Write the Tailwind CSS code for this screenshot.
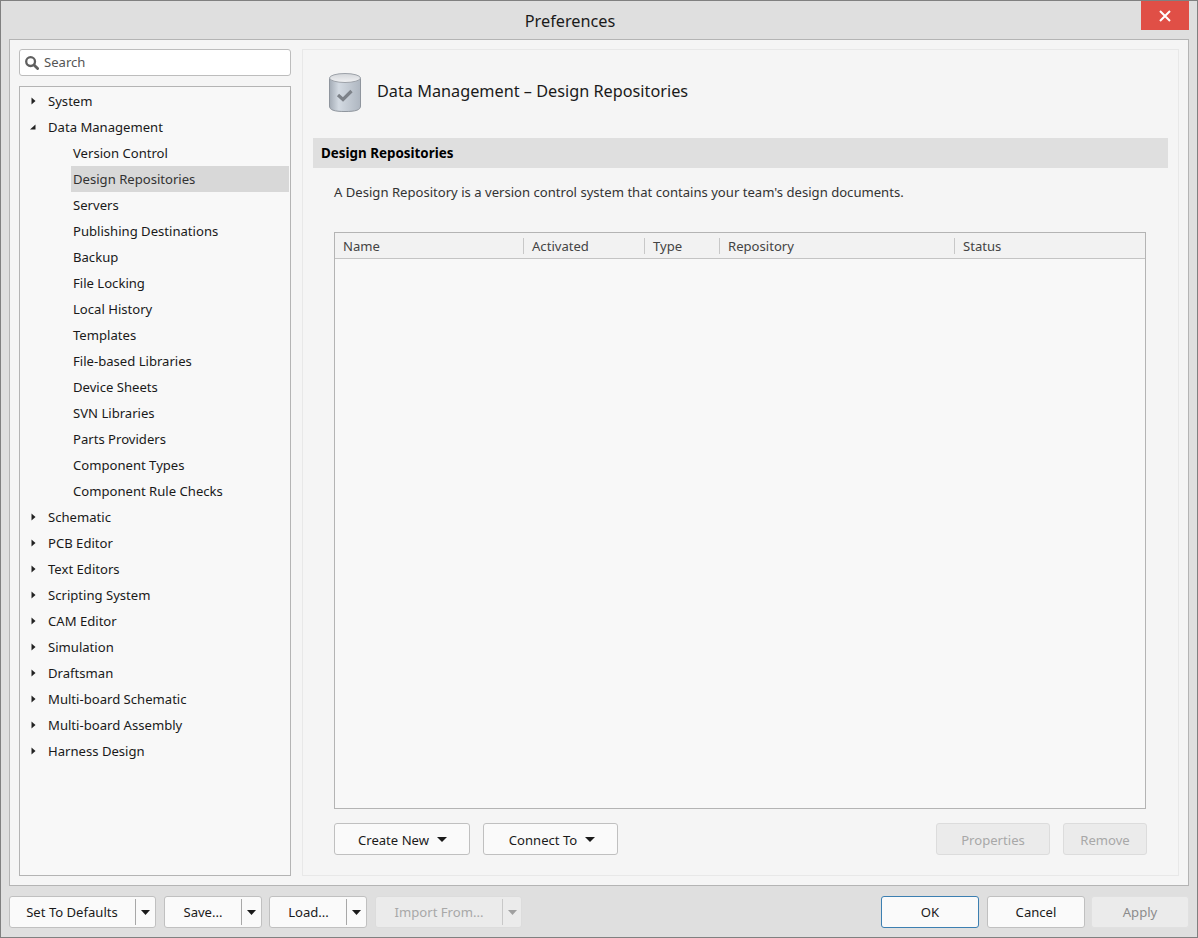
<!DOCTYPE html>
<html lang="en">
<head>
    <meta charset="UTF-8" />
    <title>Preferences</title>
    <script src="https://cdn.jsdelivr.net/npm/@tailwindcss/browser@4"></script>
</head>
<body class="bg-[#dfdfdf] text-[#1a1a1a] font-['Noto_Sans',sans-serif] text-[13.1px] leading-[20px] overflow-hidden">
<div class="w-[1198px] h-[938px] border border-[#808080] bg-[#dfdfdf] flex flex-col">

    <!-- title bar -->
    <div class="flex h-[38px] shrink-0">
        <div class="flex-1 text-center text-[16.25px] leading-[40px] pr-[2px]">Preferences</div>
        <div class="w-[48px] h-[29px] mr-[8px] bg-[#e04f46] flex items-center justify-center">
            <svg width="12" height="12" viewBox="0 0 12 12"><path d="M1 1L11 11M11 1L1 11" stroke="#fff" stroke-width="2" fill="none"/></svg>
        </div>
    </div>

    <!-- main area -->
    <div class="mx-[8px] h-[847px] shrink-0 border border-[#b4b4b4] bg-[#f5f5f5] p-[9px] flex gap-[11px]">

        <!-- left column -->
        <div class="w-[272px] shrink-0 flex flex-col gap-[10px]">
            <div class="h-[27px] shrink-0 bg-white border border-[#bdbdbd] rounded-[3px] flex items-center pl-[5px] gap-[5px] text-[#555]">
                <svg width="14" height="14" viewBox="0 0 14 14"><circle cx="5.6" cy="5.6" r="4.4" fill="none" stroke="#5f5f5f" stroke-width="2.3"/><path d="M9 9L12.6 12.6" stroke="#5f5f5f" stroke-width="2.8" stroke-linecap="round"/></svg>
                <span class="mb-[2px]">Search</span>
            </div>
            <div id="tree" class="flex-1 border border-[#b4b4b4] bg-[#f8f8f8] pt-[1px] px-[1px]">
                <div class="h-[26px] flex items-center"><span class="w-[12px] ml-[10px] flex"><svg width="5" height="8" viewBox="0 0 5 8"><path d="M0.5 0.5L4.5 4L0.5 7.5Z" fill="#222"/></svg></span><span class="ml-[5px]">System</span></div>
                <div class="h-[26px] flex items-center"><span class="w-[12px] ml-[8px] flex"><svg width="8" height="8" viewBox="0 0 8 8"><path d="M6.5 1.5V6.5H1Z" fill="#222"/></svg></span><span class="ml-[7px]">Data Management</span></div>
                <div class="h-[26px] flex items-center pl-[52px]">Version Control</div>
                <div class="h-[26px] flex items-center pl-[2px] ml-[50px] mr-0 bg-[#d8d8d8] text-[#333]">Design Repositories</div>
                <div class="h-[26px] flex items-center pl-[52px]">Servers</div>
                <div class="h-[26px] flex items-center pl-[52px]">Publishing Destinations</div>
                <div class="h-[26px] flex items-center pl-[52px]">Backup</div>
                <div class="h-[26px] flex items-center pl-[52px]">File Locking</div>
                <div class="h-[26px] flex items-center pl-[52px]">Local History</div>
                <div class="h-[26px] flex items-center pl-[52px]">Templates</div>
                <div class="h-[26px] flex items-center pl-[52px]">File-based Libraries</div>
                <div class="h-[26px] flex items-center pl-[52px]">Device Sheets</div>
                <div class="h-[26px] flex items-center pl-[52px]">SVN Libraries</div>
                <div class="h-[26px] flex items-center pl-[52px]">Parts Providers</div>
                <div class="h-[26px] flex items-center pl-[52px]">Component Types</div>
                <div class="h-[26px] flex items-center pl-[52px]">Component Rule Checks</div>
                <div class="h-[26px] flex items-center"><span class="w-[12px] ml-[10px] flex"><svg width="5" height="8" viewBox="0 0 5 8"><path d="M0.5 0.5L4.5 4L0.5 7.5Z" fill="#222"/></svg></span><span class="ml-[5px]">Schematic</span></div>
                <div class="h-[26px] flex items-center"><span class="w-[12px] ml-[10px] flex"><svg width="5" height="8" viewBox="0 0 5 8"><path d="M0.5 0.5L4.5 4L0.5 7.5Z" fill="#222"/></svg></span><span class="ml-[5px]">PCB Editor</span></div>
                <div class="h-[26px] flex items-center"><span class="w-[12px] ml-[10px] flex"><svg width="5" height="8" viewBox="0 0 5 8"><path d="M0.5 0.5L4.5 4L0.5 7.5Z" fill="#222"/></svg></span><span class="ml-[5px]">Text Editors</span></div>
                <div class="h-[26px] flex items-center"><span class="w-[12px] ml-[10px] flex"><svg width="5" height="8" viewBox="0 0 5 8"><path d="M0.5 0.5L4.5 4L0.5 7.5Z" fill="#222"/></svg></span><span class="ml-[5px]">Scripting System</span></div>
                <div class="h-[26px] flex items-center"><span class="w-[12px] ml-[10px] flex"><svg width="5" height="8" viewBox="0 0 5 8"><path d="M0.5 0.5L4.5 4L0.5 7.5Z" fill="#222"/></svg></span><span class="ml-[5px]">CAM Editor</span></div>
                <div class="h-[26px] flex items-center"><span class="w-[12px] ml-[10px] flex"><svg width="5" height="8" viewBox="0 0 5 8"><path d="M0.5 0.5L4.5 4L0.5 7.5Z" fill="#222"/></svg></span><span class="ml-[5px]">Simulation</span></div>
                <div class="h-[26px] flex items-center"><span class="w-[12px] ml-[10px] flex"><svg width="5" height="8" viewBox="0 0 5 8"><path d="M0.5 0.5L4.5 4L0.5 7.5Z" fill="#222"/></svg></span><span class="ml-[5px]">Draftsman</span></div>
                <div class="h-[26px] flex items-center"><span class="w-[12px] ml-[10px] flex"><svg width="5" height="8" viewBox="0 0 5 8"><path d="M0.5 0.5L4.5 4L0.5 7.5Z" fill="#222"/></svg></span><span class="ml-[5px]">Multi-board Schematic</span></div>
                <div class="h-[26px] flex items-center"><span class="w-[12px] ml-[10px] flex"><svg width="5" height="8" viewBox="0 0 5 8"><path d="M0.5 0.5L4.5 4L0.5 7.5Z" fill="#222"/></svg></span><span class="ml-[5px]">Multi-board Assembly</span></div>
                <div class="h-[26px] flex items-center"><span class="w-[12px] ml-[10px] flex"><svg width="5" height="8" viewBox="0 0 5 8"><path d="M0.5 0.5L4.5 4L0.5 7.5Z" fill="#222"/></svg></span><span class="ml-[5px]">Harness Design</span></div>
            </div>
        </div>

        <!-- right panel -->
        <div class="flex-1 border border-[#e8e8e8] flex flex-col">
            <div class="h-[88px] shrink-0 flex items-center pl-[25px] pb-[4px] gap-[15px]">
                <svg width="34" height="41" viewBox="0 0 34 41">
                    <defs>
                        <linearGradient id="can" x1="0" x2="1" y1="0" y2="0">
                            <stop offset="0" stop-color="#a3abb5"/>
                            <stop offset="0.3" stop-color="#d3dae2"/>
                            <stop offset="1" stop-color="#aeb6c0"/>
                        </linearGradient>
                        <linearGradient id="lid" x1="0" x2="0" y1="0" y2="1">
                            <stop offset="0" stop-color="#d2d5d9"/>
                            <stop offset="1" stop-color="#f1f2f4"/>
                        </linearGradient>
                    </defs>
                    <path d="M1.5 6V34C1.5 38 6 39.5 17 39.5S32.5 38 32.5 34V6Z" fill="url(#can)" stroke="#8f959d"/>
                    <ellipse cx="17" cy="6" rx="15.5" ry="4.5" fill="url(#lid)" stroke="#9da2a9"/>
                    <path d="M10 23L15 27.5L23.5 19" fill="none" stroke="#7d8289" stroke-width="3.2"/>
                </svg>
                <span class="text-[16.25px] mb-[2px]">Data Management – Design Repositories</span>
            </div>
            <div class="h-[30px] shrink-0 mx-[10px] bg-[#dfdfdf] pl-[8px] flex items-center font-bold text-black text-[13.4px]">Design Repositories</div>
            <div class="h-[48px] shrink-0 pl-[31px] flex items-center text-[#333]">A Design Repository is a version control system that contains your team's design documents.</div>
            <div class="h-[16px] shrink-0"></div>

            <!-- table -->
            <div class="h-[577px] shrink-0 ml-[31px] mr-[32px] border border-[#b4b4b4] bg-[#f8f8f8]">
                <div class="h-[26px] pt-[1px] flex items-center bg-[#f2f2f2] border-b border-[#c4c4c4] text-[#444]">
                    <div class="w-[188px] pl-[8px]">Name</div>
                    <div class="w-[121px] pl-[8px] border-l border-[#c8c8c8] h-[16px] flex items-center">Activated</div>
                    <div class="w-[75px] pl-[8px] border-l border-[#c8c8c8] h-[16px] flex items-center">Type</div>
                    <div class="w-[235px] pl-[8px] border-l border-[#c8c8c8] h-[16px] flex items-center">Repository</div>
                    <div class="flex-1 pl-[8px] border-l border-[#c8c8c8] h-[16px] flex items-center">Status</div>
                </div>
            </div>

            <div class="flex mt-[14px] ml-[31px] mr-[31px] h-[32px]">
                <div class="w-[136px] pt-[1px] pl-[1px] bg-[#fafafa] border border-[#c0c0c0] rounded-[3px] flex items-center justify-center gap-[8px]">
                    <span>Create New</span><svg width="10" height="5" viewBox="0 0 10 5"><path d="M0 0H10L5 5Z" fill="#1a1a1a"/></svg>
                </div>
                <div class="w-[135px] pt-[1px] pl-[3px] ml-[13px] bg-[#fafafa] border border-[#c0c0c0] rounded-[3px] flex items-center justify-center gap-[8px]">
                    <span>Connect To</span><svg width="10" height="5" viewBox="0 0 10 5"><path d="M0 0H10L5 5Z" fill="#1a1a1a"/></svg>
                </div>
                <div class="w-[114px] pt-[1px] ml-auto bg-[#ebebeb] border border-[#dcdcdc] rounded-[3px] flex items-center justify-center text-[#a8a8a8]">Properties</div>
                <div class="w-[84px] pt-[1px] ml-[13px] bg-[#ebebeb] border border-[#dcdcdc] rounded-[3px] flex items-center justify-center text-[#a8a8a8]">Remove</div>
            </div>
        </div>
    </div>

    <!-- bottom buttons -->
    <div class="flex mt-[10px] ml-[8px] mr-[8px] h-[32px]">
        <div class="w-[147px] bg-[#fafafa] border border-[#c0c0c0] rounded-[3px] flex items-center">
            <span class="w-[124px] text-center">Set To Defaults</span>
            <span class="h-[26px] ml-[1px] border-l border-[#a8a8a8]"></span>
            <span class="flex-1 flex justify-center"><svg width="9" height="5" viewBox="0 0 9 5"><path d="M0 0H9L4.5 5Z" fill="#1a1a1a"/></svg></span>
        </div>
        <div class="w-[98px] ml-[8px] bg-[#fafafa] border border-[#c0c0c0] rounded-[3px] flex items-center">
            <span class="w-[76px] text-center">Save...</span>
            <span class="h-[26px] border-l border-[#a8a8a8]"></span>
            <span class="flex-1 flex justify-center"><svg width="9" height="5" viewBox="0 0 9 5"><path d="M0 0H9L4.5 5Z" fill="#1a1a1a"/></svg></span>
        </div>
        <div class="w-[98px] ml-[7px] bg-[#fafafa] border border-[#c0c0c0] rounded-[3px] flex items-center">
            <span class="w-[77px] text-center">Load...</span>
            <span class="h-[26px] -ml-[1px] border-l border-[#a8a8a8]"></span>
            <span class="flex-1 flex justify-center"><svg width="9" height="5" viewBox="0 0 9 5"><path d="M0 0H9L4.5 5Z" fill="#1a1a1a"/></svg></span>
        </div>
        <div class="w-[147px] ml-[8px] bg-[#ebebeb] border border-[#dcdcdc] rounded-[3px] flex items-center text-[#a8a8a8]">
            <span class="w-[126px] text-center">Import From...</span>
            <span class="h-[26px] border-l border-[#c8c8c8]"></span>
            <span class="flex-1 flex justify-center"><svg width="9" height="5" viewBox="0 0 9 5"><path d="M0 0H9L4.5 5Z" fill="#a0a0a0"/></svg></span>
        </div>
        <div class="w-[98px] ml-auto bg-[#fafafa] border border-[#3c7fb1] rounded-[3px] flex items-center justify-center">OK</div>
        <div class="w-[98px] ml-[8px] bg-[#fafafa] border border-[#c0c0c0] rounded-[3px] flex items-center justify-center">Cancel</div>
        <div class="w-[98px] ml-[6px] bg-[#ebebeb] border border-[#e0e0e0] rounded-[3px] flex items-center justify-center text-[#8c8c8c]">Apply</div>
    </div>
</div>
</body>
</html>
